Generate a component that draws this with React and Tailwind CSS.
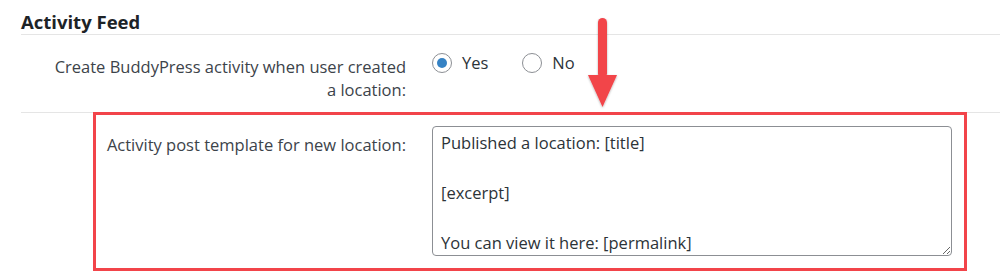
import React from 'react';

function Radio({ checked, label }) {
  return (
    <label className="flex items-center gap-[10px] text-[16.5px] text-[#2c3338]">
      <span className="w-5 h-5 rounded-full border border-[#8c8f94] bg-white flex items-center justify-center">
        {checked && <span className="w-[10px] h-[10px] rounded-full bg-[#3582c4]" />}
      </span>
      {label}
    </label>
  );
}

export default function App() {
  return (
    <div className="relative w-[1000px] h-[280px] overflow-hidden bg-white font-['Open_Sans',sans-serif]">
      <div className="pl-[21px]">
        {/* Section heading */}
        <h2 className="h-[35px] pt-[10px] text-[18.5px] leading-[24px] font-bold text-[#1d2327] border-b border-[#e5e5e5]">
          Activity Feed
        </h2>

        {/* Row: create activity */}
        <div className="flex h-[78px] border-b border-[#e5e5e5]">
          <div className="w-[385px] pl-[30px] pt-[20px] text-right text-[16.5px] leading-[23px] text-[#3c434a]">
            Create BuddyPress activity when user created a location:
          </div>
          <div className="ml-[26px] pt-[16px] flex gap-[34px] h-fit">
            <Radio checked label="Yes" />
            <Radio label="No" />
          </div>
        </div>

        {/* Row: template (highlighted) */}
        <div className="-mt-px ml-[72px] w-[874px] flex border-[3px] border-[#f2444a]">
          <div className="w-[310px] pt-[19px] text-right text-[16.5px] leading-[22px] text-[#3c434a]">
            Activity post template for new location:
          </div>
          <textarea
            className="ml-[26px] mt-[11px] mb-[12px] w-[520px] h-[130px] rounded-[4px] border border-[#8c8f94] px-[8px] pt-[3px] text-[16.5px] leading-[25px] text-[#2c3338] outline-none overflow-hidden"
            defaultValue={'Published a location: [title]\n\n[excerpt]\n\nYou can view it here: [permalink]'}
          />
        </div>
      </div>

      {/* Annotation arrow */}
      <svg className="absolute left-[584px] top-[14px]" width="40" height="100" viewBox="0 0 40 100">
        <defs>
          <filter id="sh" x="-50%" y="-20%" width="200%" height="140%">
            <feDropShadow dx="0" dy="1" stdDeviation="1.2" floodColor="#000" floodOpacity="0.3" />
          </filter>
        </defs>
        <g filter="url(#sh)" fill="#f2444a">
          <rect x="14" y="4" width="9" height="60" rx="4.5" />
          <polygon points="4,61 33,61 18.5,93" />
        </g>
      </svg>
    </div>
  );
}
